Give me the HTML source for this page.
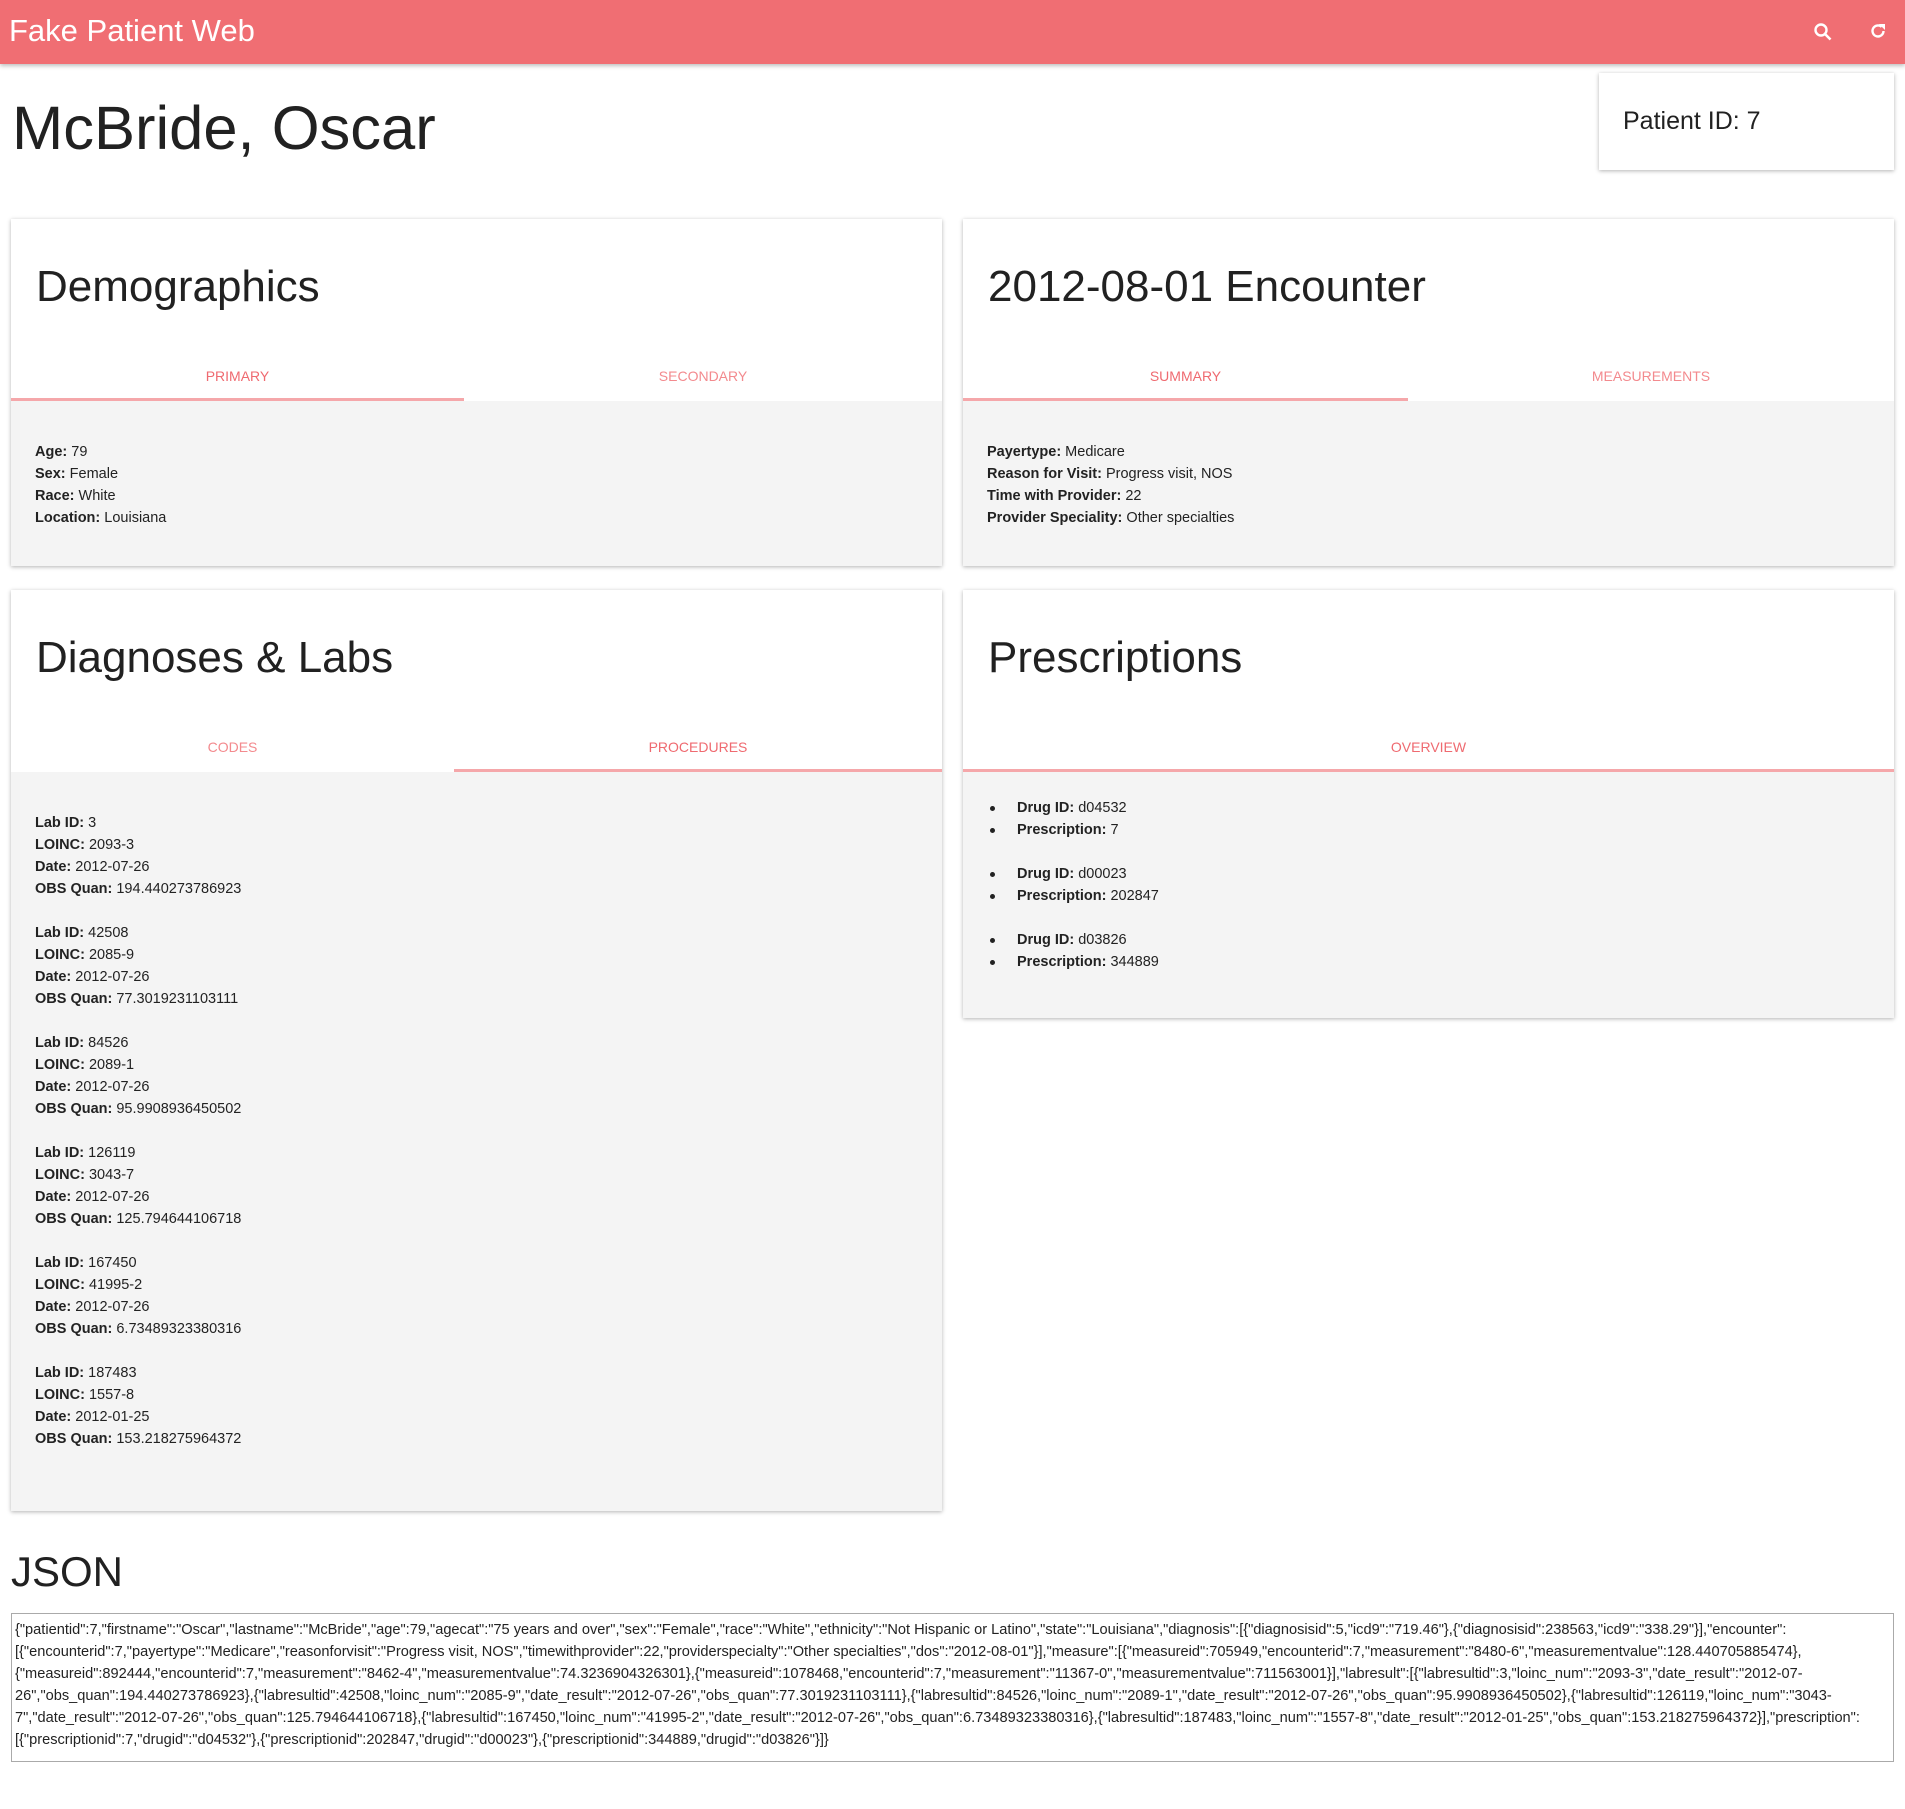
<!DOCTYPE html>
<html><head><meta charset="utf-8"><style>
*{box-sizing:border-box}
body{margin:0;width:1905px;height:1809px;background:#fff;font-family:"Liberation Sans",sans-serif;color:#212121;position:relative;overflow:hidden}
.hdr{position:absolute;left:0;top:0;width:1905px;height:64px;background:#f06e73;box-shadow:0 2px 4px rgba(0,0,0,.25)}
.hdr .t{position:absolute;left:9px;top:13px;font-size:31px;color:#fff}
.abs{position:absolute}
.name{left:12px;top:94px;font-size:61.5px;line-height:70px;color:#212121}
.pid{left:1599px;top:73px;width:295px;height:97px;background:#fff;box-shadow:0 1px 4px rgba(0,0,0,.3)}
.pid span{position:absolute;left:24px;top:34px;font-size:25px}
.card{position:absolute;background:#f4f4f4;box-shadow:0 1px 4px rgba(0,0,0,.3);overflow:hidden}
.card .top{position:absolute;left:0;top:0;right:0;height:182px;background:#fff}
.card h2{position:absolute;left:25px;top:42px;margin:0;font-weight:normal;font-size:44px;line-height:52px}
.tab{position:absolute;top:148px;height:34px;text-align:center;font-size:14px;color:#f38a8e;line-height:18px}
.tab.a{color:#ef6a70;border-bottom:3px solid #f5a7aa}
.body{position:absolute;left:24px;top:222px;font-size:14.5px;line-height:22px;color:#222}
.body b{font-weight:bold}
ul{margin:0;padding:0 0 0 30px;list-style:none}
li{position:relative}
li::before{content:"";position:absolute;left:-27px;top:9px;width:5px;height:5px;border-radius:50%;background:#222}
.j{left:11px;top:1546px;font-size:42px;line-height:52px}
.ta{position:absolute;left:11px;top:1613px;width:1883px;height:149px;border:1px solid #aaa;padding:5px 3px;font-size:14.6px;line-height:22px;color:#222;word-break:normal;overflow-wrap:break-word}
</style></head><body>
<div class="hdr"><span class="t">Fake Patient Web</span>
<svg class="abs" style="left:1813px;top:22px" width="20" height="20" viewBox="0 0 20 20"><circle cx="8" cy="8" r="5.5" fill="none" stroke="#fff" stroke-width="2.4"/><path d="M12 12l5.5 5.5" stroke="#fff" stroke-width="2.6"/></svg>
<svg class="abs" style="left:1868px;top:21px" width="20" height="20" viewBox="0 0 20 20"><path d="M15.5 10a5.5 5.5 0 1 1-1.8-4.1" fill="none" stroke="#fff" stroke-width="2.4"/><path d="M11 3h6v6z" fill="#fff"/></svg>
</div>
<div class="abs name">McBride, Oscar</div>
<div class="abs pid"><span>Patient ID: 7</span></div>

<div class="card" style="left:11px;top:219px;width:931px;height:347px">
<div class="top"></div><h2>Demographics</h2>
<div class="tab a" style="left:0;width:453px">PRIMARY</div>
<div class="tab" style="left:453px;width:478px">SECONDARY</div>
<div class="body"><b>Age:</b> 79<br><b>Sex:</b> Female<br><b>Race:</b> White<br><b>Location:</b> Louisiana</div>
</div>

<div class="card" style="left:963px;top:219px;width:931px;height:347px">
<div class="top"></div><h2>2012-08-01 Encounter</h2>
<div class="tab a" style="left:0;width:445px">SUMMARY</div>
<div class="tab" style="left:445px;width:486px">MEASUREMENTS</div>
<div class="body"><b>Payertype:</b> Medicare<br><b>Reason for Visit:</b> Progress visit, NOS<br><b>Time with Provider:</b> 22<br><b>Provider Speciality:</b> Other specialties</div>
</div>

<div class="card" style="left:11px;top:590px;width:931px;height:921px">
<div class="top"></div><h2>Diagnoses &amp; Labs</h2>
<div class="tab" style="left:0;width:443px">CODES</div>
<div class="tab a" style="left:443px;width:488px">PROCEDURES</div>
<div class="body" style="top:222px">
<b>Lab ID:</b> 3<br><b>LOINC:</b> 2093-3<br><b>Date:</b> 2012-07-26<br><b>OBS Quan:</b> 194.440273786923<br><br>
<b>Lab ID:</b> 42508<br><b>LOINC:</b> 2085-9<br><b>Date:</b> 2012-07-26<br><b>OBS Quan:</b> 77.3019231103111<br><br>
<b>Lab ID:</b> 84526<br><b>LOINC:</b> 2089-1<br><b>Date:</b> 2012-07-26<br><b>OBS Quan:</b> 95.9908936450502<br><br>
<b>Lab ID:</b> 126119<br><b>LOINC:</b> 3043-7<br><b>Date:</b> 2012-07-26<br><b>OBS Quan:</b> 125.794644106718<br><br>
<b>Lab ID:</b> 167450<br><b>LOINC:</b> 41995-2<br><b>Date:</b> 2012-07-26<br><b>OBS Quan:</b> 6.73489323380316<br><br>
<b>Lab ID:</b> 187483<br><b>LOINC:</b> 1557-8<br><b>Date:</b> 2012-01-25<br><b>OBS Quan:</b> 153.218275964372</div>
</div>

<div class="card" style="left:963px;top:590px;width:931px;height:428px">
<div class="top"></div><h2>Prescriptions</h2>
<div class="tab a" style="left:0;width:931px">OVERVIEW</div>
<div class="body" style="top:207px;left:24px">
<ul><li><b>Drug ID:</b> d04532</li><li><b>Prescription:</b> 7</li></ul><br>
<ul><li><b>Drug ID:</b> d00023</li><li><b>Prescription:</b> 202847</li></ul><br>
<ul><li><b>Drug ID:</b> d03826</li><li><b>Prescription:</b> 344889</li></ul>
</div>
</div>

<div class="abs j">JSON</div>
<div class="ta">{"patientid":7,"firstname":"Oscar","lastname":"McBride","age":79,"agecat":"75 years and over","sex":"Female","race":"White","ethnicity":"Not Hispanic or Latino","state":"Louisiana","diagnosis":[{"diagnosisid":5,"icd9":"719.46"},{"diagnosisid":238563,"icd9":"338.29"}],"encounter":[{"encounterid":7,"payertype":"Medicare","reasonforvisit":"Progress visit, NOS","timewithprovider":22,"providerspecialty":"Other specialties","dos":"2012-08-01"}],"measure":[{"measureid":705949,"encounterid":7,"measurement":"8480-6","measurementvalue":128.440705885474},{"measureid":892444,"encounterid":7,"measurement":"8462-4","measurementvalue":74.3236904326301},{"measureid":1078468,"encounterid":7,"measurement":"11367-0","measurementvalue":711563001}],"labresult":[{"labresultid":3,"loinc_num":"2093-3","date_result":"2012-07-26","obs_quan":194.440273786923},{"labresultid":42508,"loinc_num":"2085-9","date_result":"2012-07-26","obs_quan":77.3019231103111},{"labresultid":84526,"loinc_num":"2089-1","date_result":"2012-07-26","obs_quan":95.9908936450502},{"labresultid":126119,"loinc_num":"3043-7","date_result":"2012-07-26","obs_quan":125.794644106718},{"labresultid":167450,"loinc_num":"41995-2","date_result":"2012-07-26","obs_quan":6.73489323380316},{"labresultid":187483,"loinc_num":"1557-8","date_result":"2012-01-25","obs_quan":153.218275964372}],"prescription":[{"prescriptionid":7,"drugid":"d04532"},{"prescriptionid":202847,"drugid":"d00023"},{"prescriptionid":344889,"drugid":"d03826"}]}</div>
</body></html>
